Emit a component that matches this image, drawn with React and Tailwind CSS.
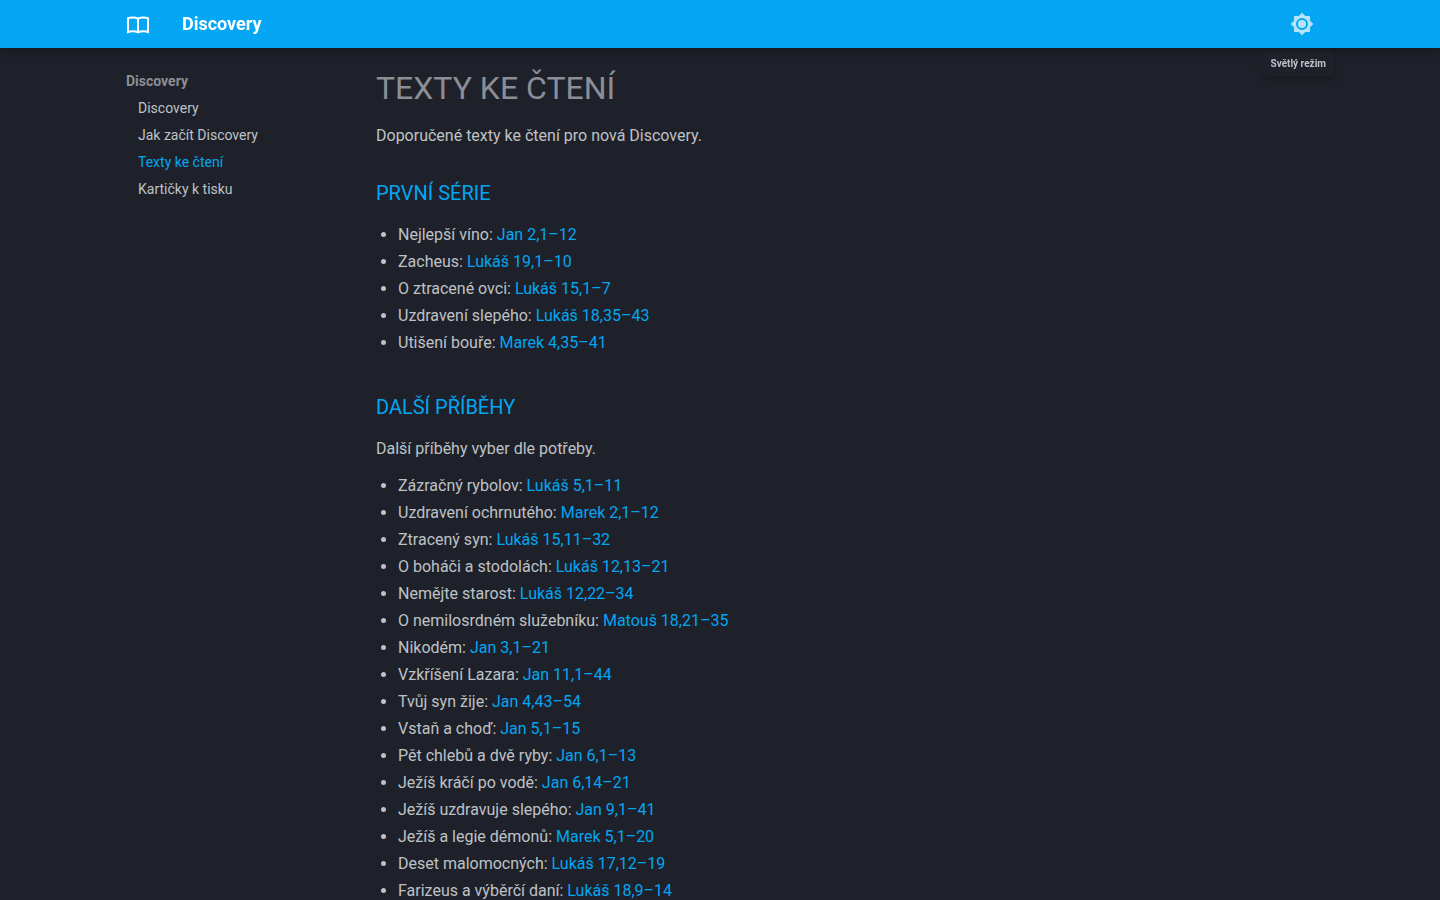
const navLinks = [
  { label: "Discovery" },
  { label: "Jak začít Discovery" },
  { label: "Texty ke čtení", active: true },
  { label: "Kartičky k tisku" },
];

const firstSeries = [
  ["Nejlepší víno", "Jan 2,1–12"],
  ["Zacheus", "Lukáš 19,1–10"],
  ["O ztracené ovci", "Lukáš 15,1–7"],
  ["Uzdravení slepého", "Lukáš 18,35–43"],
  ["Utišení bouře", "Marek 4,35–41"],
];

const moreStories = [
  ["Zázračný rybolov", "Lukáš 5,1–11"],
  ["Uzdravení ochrnutého", "Marek 2,1–12"],
  ["Ztracený syn", "Lukáš 15,11–32"],
  ["O boháči a stodolách", "Lukáš 12,13–21"],
  ["Nemějte starost", "Lukáš 12,22–34"],
  ["O nemilosrdném služebníku", "Matouš 18,21–35"],
  ["Nikodém", "Jan 3,1–21"],
  ["Vzkříšení Lazara", "Jan 11,1–44"],
  ["Tvůj syn žije", "Jan 4,43–54"],
  ["Vstaň a choď", "Jan 5,1–15"],
  ["Pět chlebů a dvě ryby", "Jan 6,1–13"],
  ["Ježíš kráčí po vodě", "Jan 6,14–21"],
  ["Ježíš uzdravuje slepého", "Jan 9,1–41"],
  ["Ježíš a legie démonů", "Marek 5,1–20"],
  ["Deset malomocných", "Lukáš 17,12–19"],
  ["Farizeus a výběrčí daní", "Lukáš 18,9–14"],
];

function BookIcon() {
  return (
    <svg viewBox="0 0 24 24" className="size-6" fill="none" stroke="currentColor" strokeWidth="2" aria-hidden="true">
      <path d="M12 6.600C10.500 5.700 8.500 5.400 6.500 5.400S3.200 5.700 2 6.100V20C3.200 19.500 4.800 19.200 6.500 19.200S10.500 19.500 12 20.400C13.500 19.500 15.500 19.200 17.500 19.200S20.800 19.500 22 20V6.100C20.800 5.700 19.500 5.400 17.500 5.400S13.500 5.700 12 6.600ZM12 6.600V20.400" />
    </svg>
  );
}

function BrightnessIcon() {
  return (
    <svg viewBox="0 0 24 24" className="size-6" fill="currentColor" aria-hidden="true">
      <path d="M12 8a4 4 0 0 0-4 4 4 4 0 0 0 4 4 4 4 0 0 0 4-4 4 4 0 0 0-4-4m0 10a6 6 0 0 1-6-6 6 6 0 0 1 6-6 6 6 0 0 1 6 6 6 6 0 0 1-6 6m8-9.310V4h-4.690L12 .69 8.690 4H4v4.690L.69 12 4 15.310V20h4.690L12 23.310 15.310 20H20v-4.690L23.310 12z" />
    </svg>
  );
}

function ReadingList({ items }) {
  return (
    <ul className="ml-[22px] list-disc pb-[7px] leading-[27px]">
      {items.map(([title, passage]) => (
        <li key={title}>
          {title}:{" "}
          <a href="#" className="text-[#02a6f2]">
            {passage}
          </a>
        </li>
      ))}
    </ul>
  );
}

export default function App() {
  return (
    <div className="h-screen overflow-y-auto bg-[#1e2129] font-[Roboto,sans-serif] text-base text-[#bfc1c7] antialiased [scrollbar-width:none]">
      <header className="sticky top-0 z-10 bg-[#05a7f5] text-white shadow-[0_0_4px_#0000001a,0_4px_8px_#00000033]">
        <div className="mx-auto flex h-12 max-w-[1220px] items-center px-4">
          <a href="#" aria-label="Discovery">
            <BookIcon />
          </a>
          <span className="ml-8 flex-1 text-lg font-bold">Discovery</span>
          <div className="relative">
            <button type="button" aria-label="Světlý režim" className="block opacity-70">
              <BrightnessIcon />
            </button>
            <span
              role="tooltip"
              className="absolute top-10 -right-5 rounded-sm bg-[#1e2129] px-2 text-[10px] leading-6 font-bold whitespace-nowrap text-[#bfc1c7] shadow-[0_4px_10px_#00000033,0_0_1px_#0000001a]"
            >
              Světlý režim
            </span>
          </div>
        </div>
      </header>

      <div className="mx-auto flex max-w-[1220px] px-4">
        <nav aria-label="Discovery" className="w-[250px] shrink-0 pt-5 text-sm leading-[27px]">
          <p className="font-bold text-[#8c8e95]">Discovery</p>
          <ul className="pl-3">
            {navLinks.map(({ label, active }) => (
              <li key={label}>
                <a href="#" aria-current={active ? "page" : undefined} className={active ? "text-[#02a6f2]" : ""}>
                  {label}
                </a>
              </li>
            ))}
          </ul>
        </nav>

        <main className="min-w-0 flex-1 pt-5">
          <h1 className="mb-3.5 text-[32px] leading-10 font-normal text-[#8c8e95] uppercase">Texty ke čtení</h1>
          <p className="leading-[27px]">Doporučené texty ke čtení pro nová Discovery.</p>
          <h2 className="mt-7 mb-3 text-xl leading-8 text-[#02a6f2] uppercase">První série</h2>
          <ReadingList items={firstSeries} />
          <h2 className="mt-7 mb-3 text-xl leading-8 text-[#02a6f2] uppercase">Další příběhy</h2>
          <p className="mb-2.5 leading-[27px]">Další příběhy vyber dle potřeby.</p>
          <ReadingList items={moreStories} />
        </main>
      </div>
    </div>
  );
}
